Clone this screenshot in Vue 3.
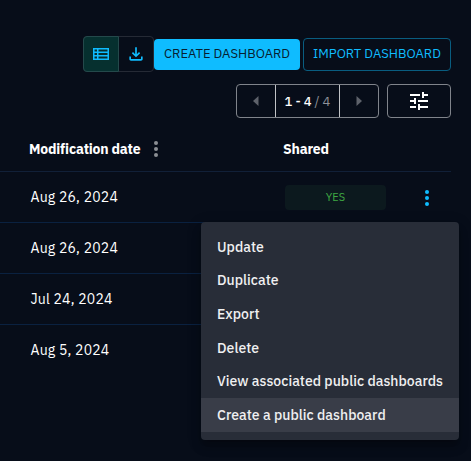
<script setup>
const rows = [
  { date: 'Aug 26, 2024', shared: true },
  { date: 'Aug 26, 2024' },
  { date: 'Jul 24, 2024' },
  { date: 'Aug 5, 2024' }
]
const items = [
  ['Update', 'update'],
  ['Duplicate', 'duplicate'],
  ['Export', 'export'],
  ['Delete', 'delete'],
  ['View associated public dashboards', 'view'],
  ['Create a public dashboard', 'create']
]
</script>

<template>
  <main class="page">
    <div class="toolbar">
      <div class="toggle">
        <button class="tg on" aria-label="List">
          <svg width="16" height="12" viewBox="0 0 16 12"><path fill="currentColor" fill-rule="evenodd" d="M0 0h16v12H0zM1.500 1.500v2H4v-2zM5.500 1.500v2h9v-2zM1.500 5v2H4V5zM5.500 5v2h9V5zM1.500 8.500v2H4v-2zM5.500 8.500v2h9v-2z" /></svg>
        </button>
        <button class="tg" aria-label="Export">
          <svg width="20" height="20" viewBox="0 0 24 24"><path fill="currentColor" d="M18 15v3H6v-3H4v3c0 1.100.9 2 2 2h12c1.100 0 2-.9 2-2v-3h-2zm-1-4-1.410-1.410L13 12.170V4h-2v8.170L8.410 9.590 7 11l5 5 5-5z" /></svg>
        </button>
      </div>
      <button class="btn solid"><span>CREATE DASHBOARD</span></button>
      <button class="btn outline"><span>IMPORT DASHBOARD</span></button>
    </div>

    <div class="pager-row">
      <div class="pager">
        <button class="pg"><svg width="6" height="10" viewBox="0 0 6 10"><path d="M5.500 0v10L0 5z" fill="#5e626b" /></svg></button>
        <div class="range"><b>1 - 4</b><i>/ 4</i></div>
        <button class="pg"><svg width="6" height="10" viewBox="0 0 6 10"><path d="M.5 0v10L6 5z" fill="#5e626b" /></svg></button>
      </div>
      <button class="filter" aria-label="Filters">
        <svg width="24" height="24" viewBox="0 0 24 24"><path fill="#fff" d="M3 17v2h6v-2H3zM3 5v2h10V5H3zm10 16v-2h8v-2h-8v-2h-2v6h2zM7 9v2H3v2h4v2h2V9H7zm14 4v-2H11v2h10zm-6-4h2V7h4V5h-4V3h-2v6z" /></svg>
      </button>
    </div>

    <div class="thead">
      <span class="th-date">Modification date</span>
      <svg class="dots" width="4" height="16" viewBox="0 0 4 16"><g fill="#8b8e94"><circle cx="2" cy="2" r="2" /><circle cx="2" cy="8" r="2" /><circle cx="2" cy="14" r="2" /></g></svg>
      <span class="th-shared">Shared</span>
    </div>
    <div v-for="(r, i) in rows" :key="i" class="row">
      <span class="date">{{ r.date }}</span>
      <template v-if="r.shared">
        <span class="chip">YES</span>
        <svg class="more" width="4" height="16" viewBox="0 0 4 16"><g fill="#0fbcff"><circle cx="2" cy="2" r="2" /><circle cx="2" cy="8" r="2" /><circle cx="2" cy="14" r="2" /></g></svg>
      </template>
    </div>

    <div class="menu">
      <div v-for="it in items" :key="it[1]" class="item" :class="{ hover: it[1] === 'create' }">
        <span>{{ it[0] }}</span>
      </div>
    </div>
  </main>
</template>

<style>
body { background: #070d19; }
</style>
<style scoped>
* { box-sizing: border-box; }
.page {
  position: relative;
  width: 471px;
  height: 461px;
  overflow: hidden;
  padding-top: 36px;
  background: #070d19;
  color: #fff;
  font-family: "IBM Plex Sans", Roboto, sans-serif;
  font-size: 14px;
  white-space: nowrap;
}
button { margin: 0; padding: 0; background: none; border: 0; font: inherit; color: inherit; }
svg { display: block; flex: none; }
.toolbar { display: flex; align-items: center; height: 36px; padding-left: 83px; }
.toggle { display: flex; width: 71px; height: 36px; border: 1px solid #252a35; border-radius: 4px; color: #0fbcff; }
.tg { flex: 1; display: flex; align-items: center; justify-content: center; }
.tg.on { flex: 0 0 36px; margin: -1px 0 -1px -1px; background: #06302f; border: 1px solid #24494b; border-radius: 4px 0 0 4px; }
.btn { display: flex; align-items: center; padding-left: 10px; padding-bottom: 2px; border-radius: 4px; font-size: 13px; }
.solid { width: 146px; height: 31px; margin-top: 1px; background: #0fbcff; color: #07202f; }
.outline { width: 148px; height: 33px; margin: 1px 0 0 3px; padding-left: 9px; border: 1px solid #095d80; color: #0fbcff; }
.pager-row { display: flex; gap: 8px; margin-top: 12px; padding-left: 236px; }
.pager { display: flex; width: 143px; height: 34px; border: 1px solid #80848b; border-radius: 4px; }
.pg { flex: 1; display: flex; align-items: center; justify-content: center; }
.range { width: 65px; display: flex; align-items: center; justify-content: center; gap: 3px; border: solid #c0c2c6; border-width: 0 1px; font-size: 13px; }
.range b { font-weight: 500; }
.range i { font-style: normal; color: #8e929a; }
.filter { display: flex; align-items: center; justify-content: center; width: 64px; height: 34px; border: 1px solid #80848b; border-radius: 4px; }
.thead { display: flex; align-items: center; width: 451px; height: 54px; padding: 8px 0 0 29px; border-bottom: 1px solid #112038; font-weight: 700; letter-spacing: -0.2px; }
.th-date { width: 125px; }
.th-shared { margin-left: 125px; }
.row { display: flex; align-items: center; width: 451px; height: 51px; padding-left: 30px; border-bottom: 1px solid #0a2140; }
.row:nth-last-child(2) { border-color: transparent; }
.date { width: 255px; padding-left: 0.5px; letter-spacing: 0.2px; }
.chip { display: flex; align-items: center; justify-content: center; width: 101px; height: 25px; padding-bottom: 1px; background: #0c191e; border-radius: 4px; color: #3fa843; font-size: 11px; }
.more { margin: 2px 0 0 39px; }
.menu { position: absolute; left: 201px; top: 222px; width: 258px; height: 218px; padding: 8px 0; border-radius: 4px; background: #282d38; box-shadow: 0 5px 5px -3px rgba(0,0,0,.2), 0 8px 10px 1px rgba(0,0,0,.14), 0 3px 14px 2px rgba(0,0,0,.12); }
.item { display: flex; align-items: center; height: 33.6px; padding-left: 16px; font-size: 14px; font-weight: 500; letter-spacing: 0.03px; color: #f0f0f1; }
.hover { background: #393d48; }
</style>
